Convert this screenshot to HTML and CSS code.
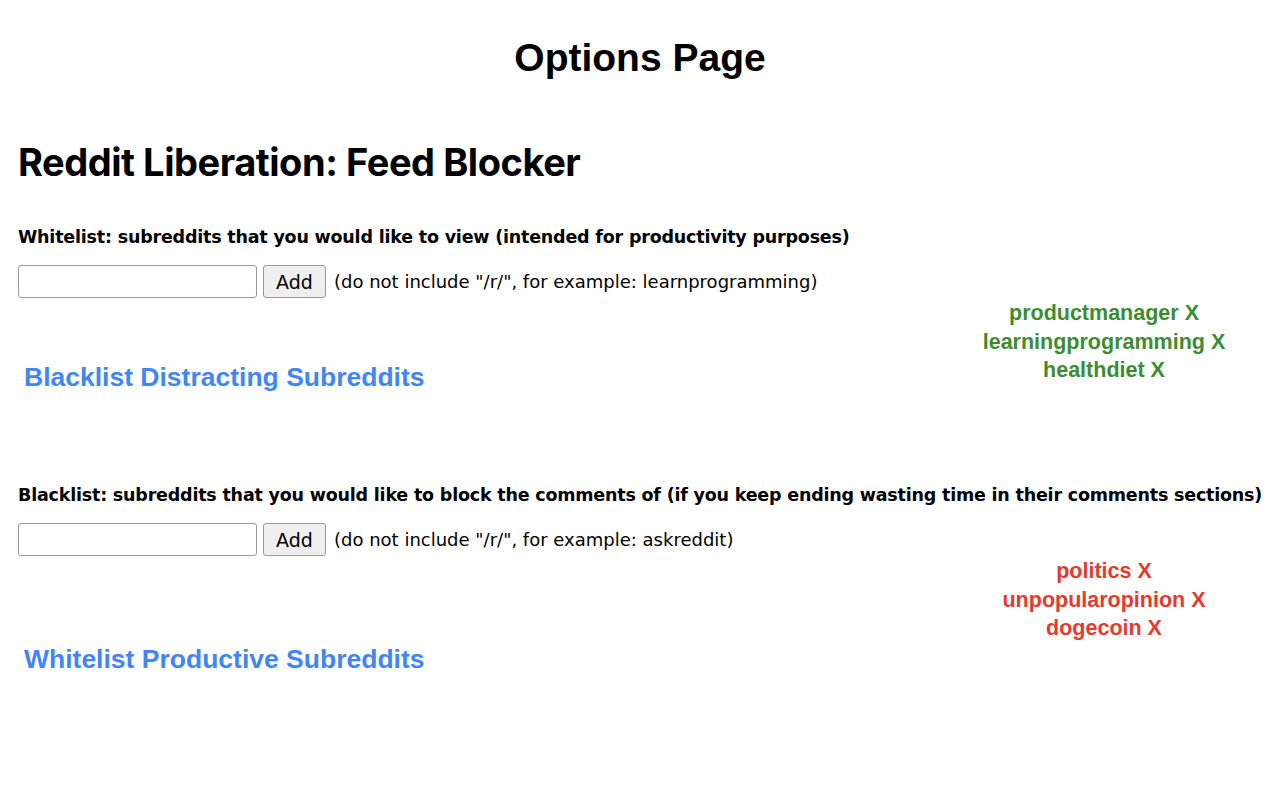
FILE: index.html
```html
<!DOCTYPE html>
<html lang="en">
<head>
<meta charset="UTF-8">
<title>Options Page</title>
<link rel="stylesheet" href="styles.css">
</head>
<body>

<h1 class="page-title">Options Page</h1>

<h2 class="app-title">Reddit Liberation: Feed Blocker</h2>

<div class="section">
    <label class="field-label" for="whitelistInput">Whitelist: subreddits that you would like to view (intended for productivity purposes)</label>
    <div class="add-row">
        <input type="text" id="whitelistInput">
        <button class="add-btn">Add</button>
        <span class="hint">(do not include "/r/", for example: learnprogramming)</span>
    </div>
    <div class="list-row">
        <a class="switch-link" href="#">Blacklist Distracting Subreddits</a>
        <ul class="sub-list green">
            <li>productmanager X</li>
            <li>learningprogramming X</li>
            <li>healthdiet X</li>
        </ul>
    </div>
</div>

<div class="section second">
    <label class="field-label" for="blacklistInput">Blacklist: subreddits that you would like to block the comments of (if you keep ending wasting time in their comments sections)</label>
    <div class="add-row">
        <input type="text" id="blacklistInput">
        <button class="add-btn">Add</button>
        <span class="hint">(do not include "/r/", for example: askreddit)</span>
    </div>
    <div class="list-row">
        <a class="switch-link" href="#">Whitelist Productive Subreddits</a>
        <ul class="sub-list red">
            <li>politics X</li>
            <li>unpopularopinion X</li>
            <li>dogecoin X</li>
        </ul>
    </div>
</div>

</body>
</html>
```

FILE: styles.css
```css
body { font-family: "Liberation Sans", Arial, sans-serif; margin: 0; padding: 0 18px; background: #fff; color: #000; }
.page-title { text-align: center; font-size: 39px; font-weight: bold; margin: 36px 0 0; line-height: 44px; }
.app-title { font-family: Inter, "Liberation Sans", sans-serif; font-size: 38px; font-weight: 700; letter-spacing: -0.45px; margin: 60px 0 0; line-height: 44px; }
.section { margin-top: 42px; }
.section.second { margin-top: 92px; }
.field-label { display: block; font-family: "DejaVu Sans", sans-serif; font-size: 17.5px; font-weight: bold; line-height: 22px; letter-spacing: -0.2px; white-space: nowrap; }
.add-row { display: flex; align-items: center; margin-top: 17px; }
.add-row input { width: 239px; height: 33px; box-sizing: border-box; border: 1px solid #9a9a9a; border-radius: 3px; font-size: 18px; margin: 0; }
.add-btn { height: 33px; width: 63px; margin-left: 6px; font-family: "DejaVu Sans", sans-serif; font-size: 19px; background: #efefef; border: 1px solid #9a9a9a; border-radius: 3px; padding: 0; color: #000; }
.hint { margin-left: 8px; font-family: "DejaVu Sans", sans-serif; font-size: 18px; }
.list-row { display: flex; justify-content: space-between; align-items: flex-start; }
.switch-link { font-size: 26.5px; font-weight: bold; color: #4285f4; text-decoration: none; margin: 64px 0 0 6px; line-height: 30px; }
.second .switch-link { margin-top: 88px; }
.sub-list { list-style: none; margin: 1px 0 0 0; padding: 0; width: 316px; text-align: center; font-size: 21.5px; font-weight: bold; line-height: 28.5px; }
.green { color: #3c8d2f; }
.red { color: #e53a2c; }
```
